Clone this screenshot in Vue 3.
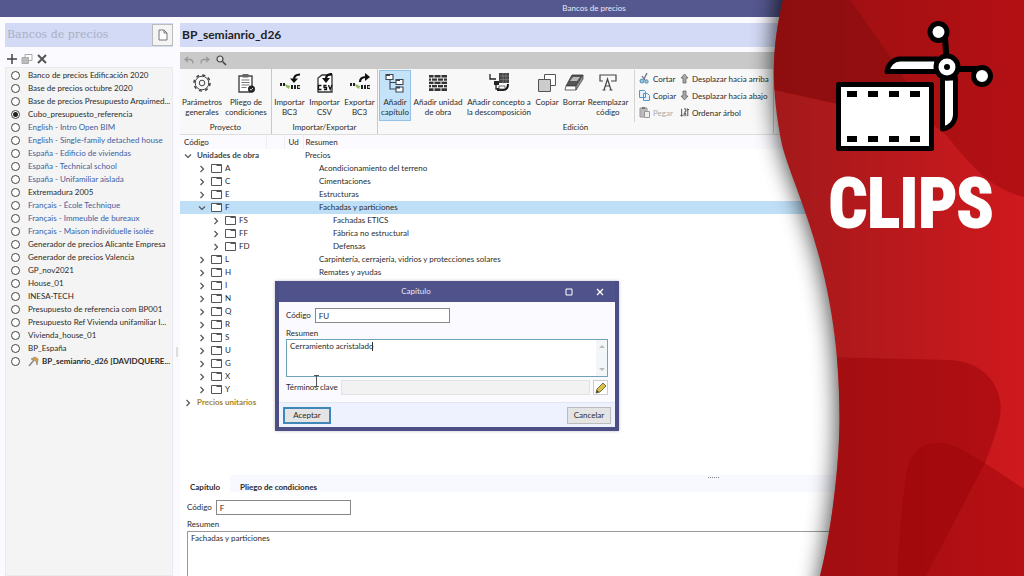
<script setup>
import { ref } from 'vue'

const selectedBank = ref(3)
const banks = [
  { name: 'Banco de precios Edificación 2020' },
  { name: 'Base de precios octubre 2020' },
  { name: 'Base de precios Presupuesto Arquimed...' },
  { name: 'Cubo_presupuesto_referencia' },
  { name: 'English - Intro Open BIM', kind: 'sample' },
  { name: 'English - Single-family detached house', kind: 'sample' },
  { name: 'España - Edificio de viviendas', kind: 'sample' },
  { name: 'España - Technical school', kind: 'sample' },
  { name: 'España - Unifamiliar aislada', kind: 'sample' },
  { name: 'Extremadura 2005' },
  { name: 'Français - École Technique', kind: 'sample' },
  { name: 'Français - Immeuble de bureaux', kind: 'sample' },
  { name: 'Français - Maison individuelle isolée', kind: 'sample' },
  { name: 'Generador de precios Alicante Empresa' },
  { name: 'Generador de precios Valencia' },
  { name: 'GP_nov2021' },
  { name: 'House_01' },
  { name: 'INESA-TECH' },
  { name: 'Presupuesto de referencia com BP001' },
  { name: 'Presupuesto Ref Vivienda unifamiliar I...' },
  { name: 'Vivienda_house_01' },
  { name: 'BP_España' },
  { name: 'BP_semianrio_d26 [DAVIDQUERE...', kind: 'open' },
]

const rows = [
  { code: 'Unidades de obra', text: 'Precios', level: 0, open: true },
  { code: 'A', text: 'Acondicionamiento del terreno', level: 1 },
  { code: 'C', text: 'Cimentaciones', level: 1 },
  { code: 'E', text: 'Estructuras', level: 1 },
  { code: 'F', text: 'Fachadas y particiones', level: 1, open: true, selected: true },
  { code: 'FS', text: 'Fachadas ETICS', level: 2 },
  { code: 'FF', text: 'Fábrica no estructural', level: 2 },
  { code: 'FD', text: 'Defensas', level: 2 },
  { code: 'L', text: 'Carpintería, cerrajería, vidrios y protecciones solares', level: 1 },
  { code: 'H', text: 'Remates y ayudas', level: 1 },
  ...['I', 'N', 'Q', 'R', 'S', 'U', 'G', 'X', 'Y'].map((code) => ({ code, text: '', level: 1 })),
  { code: 'Precios unitarios', text: '', level: 0, accent: true },
]

const newCode = ref('FU')
const newSummary = ref('Cerramiento acristalado')
const code = ref('F')
const summary = ref('Fachadas y particiones')
</script>

<template>
  <div class="app">
    <header class="titlebar">Bancos de precios</header>

    <div class="workspace">
      <aside class="side">
        <div class="side-head">
          <h2>Bancos de precios</h2>
          <button class="doc-btn" aria-label="Documento">
            <svg width="10" height="12" viewBox="0 0 10 12"><path d="M1 1h5l3 3v7H1zM6 1v3h3" fill="#fff" stroke="#777" /></svg>
          </button>
        </div>
        <div class="side-tools">
          <button aria-label="Añadir"><svg width="10" height="10" viewBox="0 0 10 10"><path d="M5 0v10M0 5h10" stroke="#444" stroke-width="1.500" /></svg></button>
          <button aria-label="Duplicar"><svg width="12" height="10" viewBox="0 0 12 10"><path d="M4 .5h7v6H4z" fill="#fff" stroke="#aaa" /><path d="M1 3.500h6.500v6H1z" fill="#bbb" stroke="#aaa" /></svg></button>
          <button aria-label="Eliminar"><svg width="10" height="10" viewBox="0 0 10 10"><path d="M1 1l8 8M9 1L1 9" stroke="#555" stroke-width="2" /></svg></button>
        </div>
        <div class="bank-list">
          <label v-for="(b, i) in banks" :key="b.name" class="bank" :class="b.kind">
            <input v-model="selectedBank" type="radio" name="bank" :value="i" />
            <svg v-if="b.kind === 'open'" class="key" width="11" height="11" viewBox="0 0 11 11">
              <path d="M1 10L6 4" stroke="#8a8a8a" stroke-width="1.500" />
              <path d="M3 3l4-2 3 2-1 6-1-4-2-1z" fill="#d9a33c" stroke="#777" stroke-width=".6" />
            </svg>
            <span>{{ b.name }}</span>
          </label>
        </div>
      </aside>

      <div class="splitter"><i></i></div>

      <main class="main">
        <h1>BP_semianrio_d26</h1>

        <div class="quick">
          <button aria-label="Deshacer"><svg width="10" height="9" viewBox="0 0 10 9"><path d="M4 1L1 3.500 4 6M1 3.500h5q3 0 3 4" fill="none" stroke="#999" stroke-width="1.300" /></svg></button>
          <button aria-label="Rehacer"><svg width="10" height="9" viewBox="0 0 10 9"><path d="M6 1l3 2.500L6 6M9 3.500H4q-3 0-3 4" fill="none" stroke="#999" stroke-width="1.300" /></svg></button>
          <button aria-label="Buscar"><svg width="11" height="11" viewBox="0 0 11 11"><circle cx="4" cy="4" r="3" fill="#ddd" stroke="#444" stroke-width="1.200" /><path d="M6.500 6.500L10 10" stroke="#444" stroke-width="1.600" /></svg></button>
        </div>

        <div class="ribbon">
          <section class="group">
            <div class="tools">
              <button class="tool w44">
                <svg width="20" height="20" viewBox="0 0 20 20" fill="none" stroke="#444">
                  <circle cx="10" cy="10" r="6.800" stroke-width="1" /><circle cx="10" cy="10" r="8" stroke-width="1.600" stroke-dasharray="3.100 3.180" /><circle cx="10" cy="10" r="2.800" />
                </svg>
                <span>Parámetros<br />generales</span>
              </button>
              <button class="tool w44">
                <svg width="20" height="20" viewBox="0 0 20 20">
                  <path d="M3 3h13v16H3z" fill="#fff" stroke="#444" stroke-width="1.400" /><path d="M6.500 1h6v3.500h-6z" fill="#666" />
                  <path d="M5.500 7h8M5.500 9.500h8M5.500 12h8M5.500 14.500h5" stroke="#777" /><circle cx="15.500" cy="16" r="3.500" fill="#222" /><path d="M14 16l1 1.200 2-2.200" fill="none" stroke="#fff" stroke-width=".8" />
                </svg>
                <span>Pliego de<br />condiciones</span>
              </button>
            </div>
            <footer>Proyecto</footer>
          </section>

          <section class="group">
            <div class="tools">
              <button class="tool w35">
                <svg width="22" height="20" viewBox="0 0 22 20">
                  <path d="M21 1.500q-6 0-6 5" fill="none" stroke="#111" stroke-width="2.200" /><path d="M11 5.500h8l-4 4.500z" fill="#111" />
                  <path d="M1 10h2v3H1zM4 10h2v3H4zM12 12h2v4h-2zM15 12h2v4h-2zM18 12h3v1.200h-2v1.600h2V16h-3z" fill="#222" /><path d="M6 11l5 2-1 3-3-2z" fill="#8fba5c" />
                </svg>
                <span>Importar<br />BC3</span>
              </button>
              <button class="tool w35">
                <svg width="20" height="20" viewBox="0 0 20 20">
                  <path d="M3 19V5l4-3h10v17z" fill="#fff" stroke="#333" stroke-width="1.300" /><path d="M17 1q-6 0-6 5" fill="none" stroke="#111" stroke-width="2.200" /><path d="M7 5h8l-4 5z" fill="#111" />
                  <path d="M6.500 12.500h-3v4h3M11.500 12.500H9v2h2.500v2H9M13.500 12l1.700 4.500L17 12" fill="none" stroke="#111" stroke-width="1.300" />
                </svg>
                <span>Importar<br />CSV</span>
              </button>
              <button class="tool w35">
                <svg width="22" height="20" viewBox="0 0 22 20">
                  <path d="M11 9q0-5 6-5" fill="none" stroke="#111" stroke-width="2.200" /><path d="M16 0v8l5-4z" fill="#111" />
                  <path d="M1 10h2v3H1zM4 10h2v3H4zM12 12h2v4h-2zM15 12h2v4h-2zM18 12h3v1.200h-2v1.600h2V16h-3z" fill="#222" /><path d="M6 11l5 2-1 3-3-2z" fill="#8fba5c" />
                </svg>
                <span>Exportar<br />BC3</span>
              </button>
            </div>
            <footer>Importar/Exportar</footer>
          </section>

          <section class="group">
            <div class="tools edit">
              <button class="tool w32 active">
                <svg width="20" height="20" viewBox="0 0 20 20" fill="#fff" stroke="#3a4652" stroke-width="1.100">
                  <path d="M5 6v10h6M5 9.500h6" fill="none" /><path d="M1 1.500h7v5H1zM11 6.500h7v5h-7zM11 14h7v5h-7z" /><path d="M1 2h4M11 7h4M11 14.500h4" stroke-width="2" />
                </svg>
                <span>Añadir<br />capítulo</span>
              </button>
              <button class="tool w54">
                <svg width="20" height="20" viewBox="0 0 20 20">
                  <path d="M1 2h18v16H1z" fill="#333" /><path d="M1 5h18M1 8.200h18M1 11.500h18M1 14.800h18" stroke="#fff" stroke-width=".9" /><path d="M6 2v3M13 2v3M3.500 5v3M9.500 5v3M15.500 5v3M6 8.500v3M13 8.500v3M3.500 12v3M9.500 12v3M15.500 12v3M6 15v3M13 15v3" stroke="#fff" stroke-width=".9" />
                </svg>
                <span>Añadir unidad<br />de obra</span>
              </button>
              <button class="tool w68">
                <svg width="22" height="20" viewBox="0 0 22 20">
                  <path d="M11 0h10v10H11z" fill="#444" /><path d="M12 3h9M12 6.500h9M15 0v10M18 0v10" stroke="#999" stroke-width=".5" /><path d="M2 1v5h6M8 8v8h4" fill="none" stroke="#222" stroke-width="1.300" /><path d="M6 8h5v4H6zM9 15h6v3H9z" fill="#222" /><path d="M20 11q0 6-5 6" fill="none" stroke="#111" stroke-width="2" /><path d="M11 13h6v3h-6z" fill="#fff" stroke="#333" stroke-width=".7" />
                </svg>
                <span>Añadir concepto a<br />la descomposición</span>
              </button>
              <button class="tool w28">
                <svg width="20" height="20" viewBox="0 0 20 20" stroke="#555"><path d="M7.500 1.500h11v11h-11z" fill="#fff" /><path d="M1.500 6.500h12v12h-12z" fill="#ccc" /></svg>
                <span>Copiar</span>
              </button>
              <button class="tool w26">
                <svg width="22" height="20" viewBox="0 0 22 20"><path d="M9 2h11l-7 11H3z" fill="#555" stroke="#333" stroke-width=".8" /><path d="M10 4h7l-3 4H7z" fill="#bbb" /><path d="M3 13h10v4H2z" fill="#fff" stroke="#444" stroke-width=".8" /><path d="M13 13l7-11v4l-7 11z" fill="#999" stroke="#444" stroke-width=".8" /></svg>
                <span>Borrar</span>
              </button>
              <button class="tool w42">
                <svg width="20" height="20" viewBox="0 0 20 20" fill="none" stroke="#444" stroke-width="1.200"><path d="M5 8H2V2h16v6h-5" /><path d="M6 17l3.500-11L13 17M7.500 13h4M4.500 17h3M11.500 17h3" /></svg>
                <span>Reemplazar<br />código</span>
              </button>
              <div class="stack first">
                <button><svg width="11" height="11" viewBox="0 0 11 11"><path d="M8 0L5 6M3 3l3 4" stroke="#667" stroke-width="1.200" /><circle cx="3" cy="8" r="2" fill="#9cc6e0" stroke="#4d8fb5" /><circle cx="7.500" cy="8.500" r="1.700" fill="#9cc6e0" stroke="#4d8fb5" /></svg>Cortar</button>
                <button><svg width="11" height="11" viewBox="0 0 11 11" fill="#e4f1fa" stroke="#5a94b8"><path d="M.5.500h5l1 1v6h-6zM4.500 3.500h4l2 2v5h-6z" /></svg>Copiar</button>
                <button disabled><svg width="11" height="11" viewBox="0 0 11 11"><path d="M1 1h7v9H1z" fill="#bbb" stroke="#999" /><path d="M3 0h3v2H3z" fill="#777" /><path d="M5.500 4.500h5v6h-5z" fill="#eee" stroke="#999" /></svg>Pegar</button>
              </div>
              <div class="stack">
                <button><svg width="9" height="11" viewBox="1 0 9 11"><path d="M5.500 1L9 5H7v5H4V5H2z" fill="#aaa" stroke="#666" stroke-width=".8" /></svg>Desplazar hacia arriba</button>
                <button><svg width="9" height="11" viewBox="1 0 9 11"><path d="M5.500 10L9 6H7V1H4v5H2z" fill="#aaa" stroke="#666" stroke-width=".8" /></svg>Desplazar hacia abajo</button>
                <button><svg width="9" height="11" viewBox="0 0 11 11" fill="none" stroke="#333"><path d="M2 1v9M.5 8.500L2 10l1.500-1.500M5 1h2v4H5M5 10V6.500h2V10M9.500 1v9M8 2.500L9.500 1 11 2.500" /></svg>Ordenar árbol</button>
              </div>
            </div>
            <footer>Edición</footer>
          </section>
        </div>

        <div class="tree">
          <table>
            <colgroup><col class="c-code" /><col class="c-gap" /><col class="c-ud" /><col /></colgroup>
            <thead><tr><th>Código</th><th></th><th>Ud</th><th>Resumen</th></tr></thead>
            <tbody>
              <tr v-for="r in rows" :key="r.code" :class="{ selected: r.selected, accent: r.accent }">
                <td>
                  <div class="node" :class="'l' + r.level">
                    <svg class="chev" width="8" height="8" viewBox="0 0 8 8" fill="none" stroke="#555" stroke-width="1.200"><path :d="r.open ? 'M1 2.500l3 3 3-3' : 'M2.500 1l3 3-3 3'" /></svg>
                    <svg v-if="r.level" class="folder" width="11" height="9" viewBox="0 0 11 9"><path d="M.5.500h10v8H.5z" fill="#fff" stroke="#555" /><path d="M5 1h5v1H6z" fill="#555" /></svg>
                    <span>{{ r.code }}</span>
                  </div>
                </td>
                <td></td>
                <td></td>
                <td><div class="desc" :class="'l' + r.level">{{ r.text }}</div></td>
              </tr>
            </tbody>
          </table>
        </div>

        <section class="detail">
          <nav class="tabs">
            <button class="on">Capítulo</button>
            <button>Pliego de condiciones</button>
            <i class="grip"></i>
          </nav>
          <div class="form">
            <div class="field"><label for="code">Código</label><input id="code" v-model="code" /></div>
            <label for="summary">Resumen</label>
            <textarea id="summary" v-model="summary"></textarea>
          </div>
        </section>
      </main>
    </div>

    <div class="dialog" role="dialog" aria-label="Capítulo">
      <header>
        <span>Capítulo</span>
        <button aria-label="Maximizar"><svg width="8" height="8" viewBox="0 0 8 8"><path d="M1 1h6v6H1z" fill="none" stroke="#fff" /></svg></button>
        <button aria-label="Cerrar"><svg width="8" height="8" viewBox="0 0 8 8"><path d="M1 1l6 6M7 1L1 7" stroke="#fff" stroke-width="1.300" /></svg></button>
      </header>
      <div class="dialog-body">
        <div class="field"><label for="new-code">Código</label><input id="new-code" v-model="newCode" /></div>
        <label for="new-summary">Resumen</label>
        <div class="area">
          <textarea id="new-summary" v-model="newSummary"></textarea>
          <i class="caret"></i>
          <div class="scroll">
            <svg width="6" height="4" viewBox="0 0 6 4"><path d="M0 4l3-3 3 3" fill="#bbb" /></svg>
            <svg width="6" height="4" viewBox="0 0 6 4"><path d="M0 0l3 3 3-3" fill="#bbb" /></svg>
          </div>
        </div>
        <div class="field terms">
          <label for="terms">Términos clave</label><input id="terms" readonly />
          <button aria-label="Editar"><svg width="12" height="12" viewBox="0 0 12 12"><path d="M1 11l1-4 6-6 3 3-6 6z" fill="#d8c04a" stroke="#6b6435" stroke-width=".9" /><path d="M1 11l1-3 2 2z" fill="#444" /></svg></button>
        </div>
        <svg class="ibeam" width="7" height="12" viewBox="0 0 7 12"><path d="M1 .5h5M3.500 .5v11M1 11.500h5" fill="none" stroke="#555" /></svg>
      </div>
      <footer><button class="primary">Aceptar</button><button>Cancelar</button></footer>
    </div>

    <aside class="promo">
      <svg class="shape" viewBox="724 0 300 576" preserveAspectRatio="none">
        <defs>
          <linearGradient id="red" x1="774" x2="1024" y1="0" y2="0" gradientUnits="userSpaceOnUse"><stop offset="0" stop-color="#a3191b" /><stop offset="1" stop-color="#cf191e" /></linearGradient>
          <filter id="soft" x="-30%" width="160%"><feGaussianBlur stdDeviation="11" /></filter>
          <clipPath id="wave"><path d="M783 0C771 50 771 90 782 145C795 195 840 270 839.500 420C839 480 828 545 820 576H1024V0Z" /></clipPath>
        </defs>
        <path d="M781 -40C769 50 769 90 780 145C793 195 838 270 837 420C837 480 826 545 812 620H1080V-40Z" fill="#000" opacity=".7" filter="url(#soft)" />
        <g clip-path="url(#wave)">
          <path d="M760 0h264v576H760z" fill="url(#red)" />
          <path d="M760 0H1024V197C990 188 973 168 946 135L934 125L774 90Z" fill="#900408" opacity=".42" />
          <path d="M760 0H850L889 55L934 125L774 90Z" fill="#7a0c0c" opacity=".4" />
          <path d="M820 357L950 360C990 362 1008 395 998 425C992 445 988 455 985 463L926 576H800Z" fill="#980408" opacity=".5" />
          <path d="M897 576C900 530 902 500 907 470C912 448 925 442 940 443C958 444 970 455 985 463L1024 489V576Z" fill="#980408" opacity=".45" />
        </g>
      </svg>
      <svg class="clip-icon" viewBox="834 18 160 136" width="160" height="136">
        <g stroke="#000" stroke-width="5" stroke-linejoin="round" fill="#fff">
          <path d="M838.500 84.500h93v64h-93z" />
          <path d="M887 71.500C888 65 893 59 900 59H937V71.500Z" />
          <path d="M942.500 78H955.500V114C955.500 122 950 128 942.500 129Z" />
          <path d="M945 38L946.500 58M957 69H978" stroke-width="6" />
          <circle cx="938.500" cy="32" r="8.500" /><circle cx="982" cy="76" r="8.500" />
          <circle cx="947" cy="67" r="11" />
        </g>
        <circle cx="947" cy="67" r="3" />
        <path d="M847 91h10v6h-10zM868 91h10v6h-10zM889 91h10v6h-10zM910 91h10v6h-10zM847 136h10v6h-10zM868 136h10v6h-10zM889 136h10v6h-10zM910 136h10v6h-10z" />
      </svg>
      <strong>CLIPS</strong>
    </aside>
  </div>
</template>

<style>
body { margin: 0; overflow: hidden; }
</style>

<style scoped>
.app { position: relative; height: 100vh; display: flex; flex-direction: column; overflow: hidden; background: #fafaff; color: #2b2b2b; font: 8px/13px Lato, "Open Sans", sans-serif; }
.app * { box-sizing: border-box; }
button, input, textarea { font: inherit; color: inherit; margin: 0; padding: 0; border: 0; background: none; border-radius: 0; outline: 0; }
button { display: flex; align-items: center; justify-content: center; }
svg { flex: none; display: block; }
h1, h2 { margin: 0; }
.titlebar { flex: none; height: 17px; line-height: 17px; padding-left: 164px; text-align: center; background: #55588f; color: #e9e9f5; }
.workspace { flex: 1; min-height: 0; display: flex; padding-top: 6px; }

.side { width: 168px; margin-left: 5px; display: flex; flex-direction: column; }
.side-head { height: 24px; display: flex; align-items: center; justify-content: space-between; background: #d3daf5; }
.side-head h2 { padding-left: 2px; font: 11px/24px "DejaVu Serif", serif; color: #a9b1c4; }
.doc-btn { width: 21px; height: 22px; margin-right: 0; background: #f4f4f4; border: 1px solid #bbb; }
.side-tools { height: 20px; display: flex; align-items: center; gap: 4px; padding: 4px 2px 0; }
.bank-list { flex: 1; padding-top: 1px; background: #f4f4f4; border: 1px solid #eaeaee; }
.bank { height: 13px; display: flex; align-items: center; padding-left: 5px; white-space: nowrap; }
.bank input { appearance: none; width: 9px; height: 9px; margin-right: 8px; border: 1px solid #444; border-radius: 50%; background: #fff; }
.bank input:checked { background: radial-gradient(#222 0 2px, #fff 3px); }
.bank.sample { color: #40609f; }
.bank.open { font-weight: 700; }
.key { margin-right: 3px; }

.splitter { width: 7px; display: flex; align-items: center; justify-content: center; }
.splitter i { width: 2px; height: 10px; margin-top: 104px; background: #ddd; }

.main { flex: 1; min-width: 0; display: flex; flex-direction: column; }
h1 { flex: none; height: 24px; padding-left: 2px; font-size: 12px; line-height: 24px; background: #d3daf5; color: #222; }
.quick { flex: none; height: 17px; margin-top: 5px; padding-left: 4px; display: flex; align-items: center; gap: 6px; background: #c9c9c9; }
.ribbon { flex: none; display: flex; height: 66px; background: #f8f8f8; border-bottom: 1px solid #ddd; line-height: 10px; }
.group { display: flex; flex-direction: column; border-right: 1px solid #c8c8c8; }
.group:first-child { width: 92px; }
.group:nth-child(3) { width: 396px; }
.group footer { height: 12px; line-height: 11px; text-align: center; }
.tools { flex: 1; display: flex; padding-top: 1px; }
.tools.edit { padding-left: 1px; }
.tool { height: 51px; flex-direction: column; justify-content: flex-start; gap: 4px; padding-top: 2px; border: 1px solid transparent; white-space: nowrap; }
.tool span { text-align: center; }
.tool.active { background: #c5e3f8; border-color: #92c3e6; }
.w26 { width: 26px; } .w28 { width: 28px; } .w32 { width: 32px; } .w35 { width: 35px; } .w42 { width: 42px; } .w44 { width: 44px; } .w54 { width: 54px; } .w68 { width: 68px; }
.stack { display: flex; flex-direction: column; align-items: flex-start; white-space: nowrap; }
.stack.first { width: 46px; margin-left: 5px; padding-left: 4px; border-left: 1px solid #d4d4d4; }
.stack button { height: 17px; gap: 3px; }
.stack button:disabled { color: #aaa; }

.tree { flex: 1; min-height: 0; overflow: hidden; background: #fff; }
table { width: 100%; border-collapse: collapse; table-layout: fixed; }
.c-code { width: 86px; } .c-gap { width: 18px; } .c-ud { width: 19px; }
th, td { height: 13px; padding: 0; text-align: left; font-weight: 400; line-height: 13px; white-space: nowrap; }
th { height: 14px; padding-left: 4px; background: #fafaff; border-right: 1px solid #eee; }
th:last-child { padding-left: 2px; }
.node { display: flex; align-items: center; height: 13px; padding-left: 4px; }
.node.l0 { font-weight: 700; color: #444; }
.node.l1 { padding-left: 18px; }
.node.l2 { padding-left: 32px; }
.chev { margin-right: 5px; }
.folder { margin-right: 3px; }
.desc { height: 13px; padding-left: 2px; }
.desc.l1 { padding-left: 16px; }
.desc.l2 { padding-left: 30px; }
.selected { background: #bfdff7; }
.node.l0, .accent .node.l0 { white-space: nowrap; }
.accent .node.l0 { color: #a4852a; }

.detail { flex: none; height: 101px; display: flex; flex-direction: column; background: #fff; }
.tabs { position: relative; height: 17px; display: flex; background: #f8f8ff; }
.tabs button { padding: 7px 10px 0; font-weight: 700; }
.tabs .on { background: #fff; }
.grip { position: absolute; top: 2px; left: 528px; width: 11px; border-top: 1px dotted #888; }
.form { flex: 1; display: flex; flex-direction: column; padding: 8px 0 0 7px; }
.field { display: flex; align-items: center; gap: 4px; }
.field input { width: 135px; height: 15px; padding: 0 3px; background: #fff; border: 1px solid #888; }
.form > label { margin-top: 3px; }
.form textarea { flex: 1; padding: 0 3px; border: 1px solid #999; border-bottom: 0; resize: none; background: #fff; }

.dialog { position: absolute; left: 275px; top: 281px; width: 344px; border: solid #4c4f86; border-width: 0 4px 4px; background: #fafaff; box-shadow: 0 0 3px #8888; }
.dialog header { height: 21px; display: flex; align-items: center; background: #4f528b; color: #e8e8f4; }
.dialog header span { flex: 1; text-align: center; }
.dialog header button { width: 31px; height: 20px; }
.dialog-body { position: relative; padding: 6px 7px 7px; display: flex; flex-direction: column; }
.dialog-body > label { margin-top: 4px; line-height: 12px; }
.area { position: relative; display: flex; height: 38px; }
.area textarea { flex: 1; padding: 0 3px; resize: none; overflow: hidden; background: #fff; border: 1px solid #6fa3b8; }
.caret { position: absolute; left: 86px; top: 3px; width: 1px; height: 9px; background: #333; }
.scroll { position: absolute; right: 1px; top: 1px; bottom: 1px; width: 11px; padding: 4px 0; display: flex; flex-direction: column; align-items: center; justify-content: space-between; background: #f3f6f9; }
.terms { margin-top: 3px; gap: 3px; }
.terms input { flex: 1; background: #f2f2f2; border-color: #e2e2e2; }
.terms button { width: 15px; height: 15px; background: #fff; border: 1px solid #ccc; }
.ibeam { position: absolute; left: 34px; top: 73px; }
.dialog footer { height: 25px; display: flex; align-items: center; justify-content: space-between; padding: 0 4px; background: #edf2fe; border-top: 1px solid #e2e6f0; }
.dialog footer button { width: 44px; height: 17px; background: #e4e4e4; border: 1px solid #bbb; }
.dialog footer .primary { width: 48px; border: 2px solid #3f87b8; }

.promo { position: absolute; right: 0; top: 0; bottom: 0; width: 300px; display: flex; flex-direction: column; align-items: flex-start; padding: 18px 36px 0 110px; overflow: hidden; }
.shape { position: absolute; inset: 0; width: 100%; height: 100%; }
.clip-icon { position: relative; }
.promo strong { position: relative; align-self: center; margin-top: 16px; color: #fff; font: 700 68px/68px "Roboto Condensed", "Liberation Sans Narrow", "Liberation Sans", sans-serif; -webkit-text-stroke: 2px #fff; }
</style>
